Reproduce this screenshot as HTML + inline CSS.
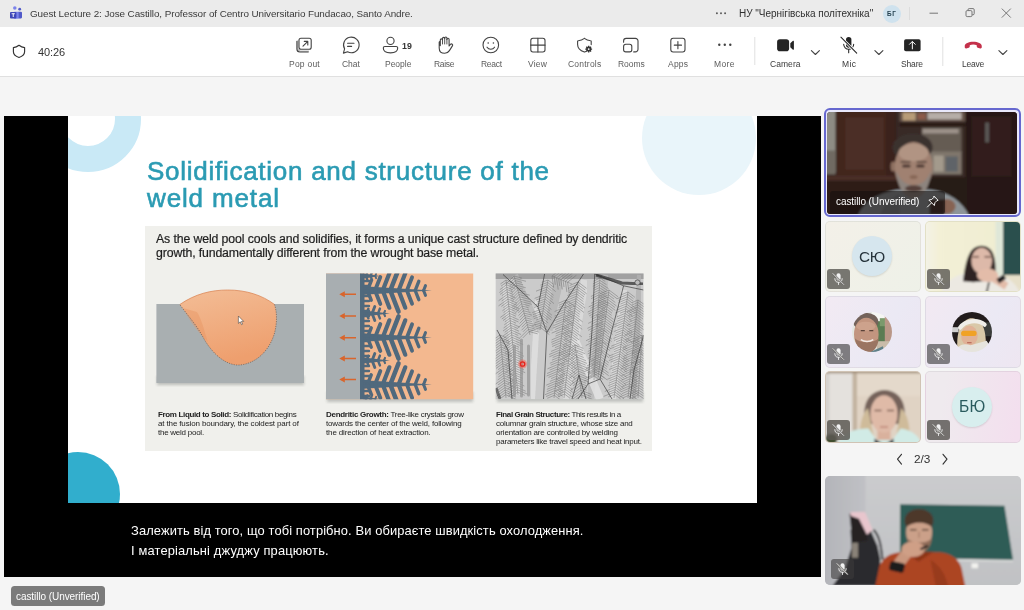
<!DOCTYPE html>
<html><head><meta charset="utf-8"><title>Teams</title>
<style>
html,body{margin:0;padding:0}
body{width:1024px;height:610px;position:relative;overflow:hidden;background:#f5f5f5;font-family:"Liberation Sans",sans-serif}
.t{position:absolute;white-space:nowrap;line-height:1;font-family:"Liberation Sans",sans-serif;will-change:transform}
.t b{font-weight:700}
.abs{position:absolute}
svg{position:absolute;overflow:visible}
.ico{fill:none;stroke:#424242;stroke-width:1.1;stroke-linecap:round;stroke-linejoin:round}
.tile{position:absolute;border-radius:5px;box-sizing:border-box;overflow:hidden}
.badge{position:absolute;width:23px;height:20px;border-radius:3px;background:rgba(72,70,66,.72)}
</style></head><body>

<div class="abs" style="left:0;top:0;width:1024px;height:27px;background:#ebebeb"></div>
<svg style="left:9px;top:5px" width="14" height="15" viewBox="0 0 14 15">
<circle cx="5.800" cy="3.100" r="1.750" fill="#7b83eb"/><circle cx="10.700" cy="4.200" r="1.400" fill="#5059c9"/>
<rect x="8.500" y="6.700" width="4.500" height="6.700" rx="1.100" fill="#5059c9"/>
<rect x="4.500" y="6.700" width="5.200" height="7" rx="1.100" fill="#7b83eb"/>
<rect x="1" y="6.900" width="6.400" height="6.600" rx="0.900" fill="#3f47b8"/>
<rect x="3.750" y="8.600" width="0.950" height="3.400" fill="#fff"/><rect x="2.600" y="8.300" width="3.250" height="0.900" fill="#fff"/>
</svg>
<div class="t" style="left:30.20px;top:9.00px;font-size:9.90px;letter-spacing:-0.079px;color:#3a3a3a;">Guest Lecture 2: Jose Castillo, Professor of Centro Universitario Fundacao, Santo Andre.</div>
<svg style="left:714px;top:10px" width="14" height="6" viewBox="714 10 14 6" fill="#555"><circle cx="716.900" cy="13.300" r="0.950"/><circle cx="721" cy="13.300" r="0.950"/><circle cx="725.100" cy="13.300" r="0.950"/></svg>
<div class="t" style="left:738.80px;top:9.00px;font-size:10.00px;letter-spacing:-0.018px;color:#303030;">НУ "Чернігівська політехніка"</div>
<div class="abs" style="left:882.5px;top:4.5px;width:18px;height:18px;border-radius:9px;background:#cfe2ee"></div>
<div class="t" style="left:887.20px;top:11.00px;font-size:6.40px;letter-spacing:0.772px;color:#24404f;"><b>БГ</b></div>
<div class="abs" style="left:909px;top:7px;width:1px;height:13px;background:#dcdcdc"></div>
<svg style="left:920px;top:0" width="104" height="27" viewBox="920 0 104 27" fill="none" stroke="#6a6a6a" stroke-width="0.9">
<path d="M929.5 13.2h8.5"/>
<rect x="966" y="10.6" width="6" height="6" rx="1.2"/><path d="M968 10.4v-0.6a1.2 1.2 0 0 1 1.2-1.2h3.8a1.2 1.2 0 0 1 1.2 1.2v3.8a1.2 1.2 0 0 1-1.2 1.2h-0.8"/>
<path d="M1001.8 8.6l9 9M1010.8 8.6l-9 9"/>
</svg>
<div class="abs" style="left:0;top:27px;width:1024px;height:49px;background:#fff;border-bottom:1px solid #e0e0e0"></div>
<svg style="left:0;top:27px" width="1024" height="49" viewBox="0 27 1024 49">
<g class="ico">
<path d="M19 45.3c2 1.6 3.9 2.2 5.6 2.3v4.2c0 2.9-2.3 4.6-5.6 5.7c-3.3-1.100-5.600-2.800-5.600-5.700v-4.200c1.700-0.100 3.600-0.700 5.600-2.300z" stroke="#333" stroke-width="1.15"/>
</g></svg>
<div class="t" style="left:37.80px;top:47.00px;font-size:11.00px;letter-spacing:-0.131px;color:#333;">40:26</div>
<div class="t" style="left:288.90px;top:60.00px;font-size:8.50px;letter-spacing:0.233px;color:#5c5c5c;">Pop out</div>
<div class="t" style="left:341.90px;top:60.00px;font-size:8.50px;letter-spacing:-0.051px;color:#5c5c5c;">Chat</div>
<div class="t" style="left:384.60px;top:60.00px;font-size:8.50px;letter-spacing:-0.013px;color:#5c5c5c;">People</div>
<div class="t" style="left:434.10px;top:60.00px;font-size:8.50px;letter-spacing:-0.333px;color:#5c5c5c;">Raise</div>
<div class="t" style="left:480.60px;top:60.00px;font-size:8.50px;letter-spacing:-0.301px;color:#5c5c5c;">React</div>
<div class="t" style="left:528.40px;top:60.00px;font-size:8.50px;letter-spacing:0.177px;color:#5c5c5c;">View</div>
<div class="t" style="left:567.80px;top:60.00px;font-size:8.50px;letter-spacing:0.222px;color:#5c5c5c;">Controls</div>
<div class="t" style="left:617.60px;top:60.00px;font-size:8.50px;letter-spacing:-0.031px;color:#5c5c5c;">Rooms</div>
<div class="t" style="left:668.00px;top:60.00px;font-size:8.50px;letter-spacing:0.209px;color:#5c5c5c;">Apps</div>
<div class="t" style="left:714.30px;top:60.00px;font-size:8.50px;letter-spacing:0.379px;color:#5c5c5c;">More</div>
<div class="t" style="left:770.00px;top:60.00px;font-size:8.50px;letter-spacing:0.054px;color:#3a3a3a;">Camera</div>
<div class="t" style="left:841.80px;top:60.00px;font-size:8.50px;letter-spacing:0.341px;color:#3a3a3a;">Mic</div>
<div class="t" style="left:901.10px;top:60.00px;font-size:8.50px;letter-spacing:-0.145px;color:#3a3a3a;">Share</div>
<div class="t" style="left:961.90px;top:60.00px;font-size:8.50px;letter-spacing:-0.214px;color:#3a3a3a;">Leave</div>
<div class="t" style="left:402.10px;top:42.00px;font-size:8.80px;letter-spacing:0.013px;color:#333;"><b>19</b></div>
<svg style="left:0;top:27px" width="1024" height="49" viewBox="0 27 1024 49">
<g class="ico">
<!-- pop out -->
<rect x="299" y="38.3" width="12.2" height="10.9" rx="2"/>
<path d="M296.900 41.200v7.800a3 3 0 0 0 3 3h8.300"/>
<path d="M297.800 40.800v7.600a2.800 2.800 0 0 0 2.800 2.800h8" stroke-width="0.8" opacity="0.6"/>
<path d="M303 46.200l4.600-4.600M304.300 41.400h3.500v3.500"/>
<!-- chat -->
<path d="M343.400 53.100l1.200-4.200a7.800 7.800 0 1 1 3 2.900z"/>
<path d="M347.600 43.300h6.400M347.600 46.400h4"/>
<!-- people -->
<circle cx="390.500" cy="40.900" r="3.600"/>
<path d="M384.800 46.500h11.400a1.500 1.500 0 0 1 1.500 1.500c0 3-3 4.900-7.200 4.900s-7.200-1.900-7.200-4.900a1.500 1.500 0 0 1 1.500-1.500z"/>
<!-- raise hand -->
<path d="M440.300 45.600v-5.600a1.100 1.100 0 0 1 2.200 0v-1.500a1.100 1.100 0 0 1 2.200 0v-0.400a1.100 1.100 0 0 1 2.200 0v1.300a1.100 1.100 0 0 1 2.200 0v6.600l1.400-1.600a1.200 1.200 0 0 1 1.900 1.500l-3 4.700c-1 1.600-2.400 2.700-4.700 2.700c-3.300 0-5.500-2.200-5.500-5.400v-5.500a1.050 1.050 0 0 1 1.100-1z"/>
<path d="M442.500 40v4M444.700 38.500v5.500M446.900 39.400v4.600" stroke-width="0.9"/>
<!-- react -->
<circle cx="490.800" cy="45" r="7.800"/>
<circle cx="488.200" cy="43" r="0.800" fill="#424242" stroke="none"/><circle cx="493.400" cy="43" r="0.800" fill="#424242" stroke="none"/>
<path d="M487 47.200a4.600 4.600 0 0 0 7.600 0"/>
<!-- view -->
<rect x="530.800" y="38.300" width="14.200" height="13.700" rx="2.200"/>
<path d="M537.900 38.300v13.700M530.800 45.150h14.200"/>
<!-- controls -->
<path d="M584.400 38.400c1.900 1.500 3.900 2.200 6.200 2.300a0.600 0.600 0 0 1 0.600 0.600v3.300M586 51.500l-1.600 0.600c-3.600-1.200-6.800-3.400-6.800-7.600v-3.200a0.600 0.600 0 0 1 0.600-0.600c2.300-0.100 4.300-0.800 6.200-2.300"/>
<!-- rooms -->
<path d="M623.600 42.200v-1.200a2.600 2.600 0 0 1 2.600-2.600h9.200a2.600 2.600 0 0 1 2.600 2.600v8.300a2.600 2.600 0 0 1-2.600 2.600h-1.700"/>
<rect x="623.600" y="44.200" width="8.200" height="7.700" rx="2.200"/>
<!-- apps -->
<rect x="670.800" y="38.300" width="14.200" height="13.700" rx="2.400"/>
<path d="M677.900 41.600v7.100M674.300 45.150h7.200"/>
</g>
<!-- controls gear -->
<g fill="#333"><circle cx="588.700" cy="49.100" r="2.500"/>
<path d="M588.700 45.700v6.800M585.300 49.100h6.800M586.300 46.700l4.800 4.800M591.100 46.700l-4.800 4.800" stroke="#333" stroke-width="1.300"/></g>
<circle cx="588.700" cy="49.100" r="0.900" fill="#fff"/>
<!-- more -->
<g fill="#424242"><circle cx="719.300" cy="44.700" r="1.200"/><circle cx="724.800" cy="44.700" r="1.200"/><circle cx="730.300" cy="44.700" r="1.200"/></g>
<rect x="754.300" y="37" width="1" height="28" fill="#e0e0e0"/>
<!-- camera -->
<rect x="777.100" y="39.300" width="12" height="11.900" rx="2.800" fill="#242424"/>
<path d="M790.300 43.200l2.400-2.200a0.700 0.700 0 0 1 1.200 0.500v7.500a0.700 0.700 0 0 1-1.200 0.500l-2.400-2.200z" fill="#242424"/>
<!-- chevrons -->
<g class="ico" stroke="#424242" stroke-width="1">
<path d="M811.400 50.700l4 3.800l4-3.800M874.900 50.700l4 3.800l4-3.800M998.900 50.700l4 3.800l4-3.800"/>
</g>
<!-- mic off -->
<rect x="846" y="36.900" width="5.400" height="10.800" rx="2.700" fill="#242424"/>
<path d="M843.700 44.300a5 5 0 0 0 10 0M848.700 49.500v3.300" fill="none" stroke="#242424" stroke-width="1.050" stroke-linecap="round"/>
<path d="M840.900 37.200l15.800 15.900" stroke="#fff" stroke-width="2.600"/>
<path d="M840.900 37.200l15.800 15.900" stroke="#242424" stroke-width="1.050" stroke-linecap="round"/>
<!-- share -->
<rect x="904.100" y="39.200" width="16.500" height="12" rx="1.800" fill="#242424"/>
<path d="M912.350 48.900v-7M909.500 44.300l2.850-2.850l2.850 2.850" fill="none" stroke="#fff" stroke-width="1" stroke-linecap="round" stroke-linejoin="round"/>
<rect x="942.300" y="37" width="1" height="29" fill="#e0e0e0"/>
<!-- leave -->
<path d="M973.250 41.700c-4.600 0-8.500 1.600-8.500 4.300v1.300c0 0.800 0.700 1.300 1.500 1.100l2.500-0.600c0.600-0.150 1-0.600 1-1.200v-1.400c1-0.500 2.200-0.700 3.500-0.700s2.500 0.200 3.500 0.700v1.400c0 0.600 0.400 1.050 1 1.200l2.500 0.600c0.800 0.200 1.500-0.300 1.500-1.100v-1.300c0-2.700-3.900-4.300-8.500-4.300z" fill="#c4314b"/>
</svg>
<div class="abs" style="left:4px;top:116px;width:817px;height:461px;background:#000"></div>
<div class="abs" style="left:68px;top:116px;width:689px;height:387px;background:#fff;overflow:hidden">
<div class="abs" style="left:-33px;top:-50px;width:106px;height:106px;border-radius:50%;border:26px solid #c9e9f6;box-sizing:border-box"></div>
<div class="abs" style="left:574px;top:-35px;width:114px;height:114px;border-radius:50%;background:#e9f5fa"></div>
<div class="abs" style="left:-32px;top:336px;width:84px;height:84px;border-radius:50%;background:linear-gradient(#31aecd 75%,#59bdd6)"></div>
<div class="abs" style="left:77px;top:110px;width:507px;height:224.5px;background:#f0f0ec"></div>
</div>
<div class="t" style="left:146.60px;top:158.00px;font-size:26.00px;letter-spacing:0.730px;color:#2b9bb3;-webkit-text-stroke:0.6px #2b9bb3;">Solidification and structure of the</div>
<div class="t" style="left:146.60px;top:185.00px;font-size:26.00px;letter-spacing:0.859px;color:#2b9bb3;-webkit-text-stroke:0.6px #2b9bb3;">weld metal</div>
<div class="t" style="left:156.30px;top:233.00px;font-size:12.30px;letter-spacing:-0.117px;color:#1d1d1d;-webkit-text-stroke:0.2px #1d1d1d;">As the weld pool cools and solidifies, it forms a unique cast structure defined by dendritic</div>
<div class="t" style="left:156.30px;top:247.00px;font-size:12.30px;letter-spacing:-0.130px;color:#1d1d1d;-webkit-text-stroke:0.2px #1d1d1d;">growth, fundamentally different from the wrought base metal.</div>
<div class="t" style="left:158.00px;top:411.00px;font-size:8.00px;letter-spacing:-0.351px;color:#222;"><b>From Liquid to Solid:</b> Solidification begins</div>
<div class="t" style="left:158.00px;top:420.00px;font-size:8.00px;letter-spacing:-0.136px;color:#222;">at the fusion boundary, the coldest part of</div>
<div class="t" style="left:158.00px;top:429.00px;font-size:8.00px;letter-spacing:-0.251px;color:#222;">the weld pool.</div>
<div class="t" style="left:326.30px;top:411.00px;font-size:8.00px;letter-spacing:-0.286px;color:#222;"><b>Dendritic Growth:</b> Tree-like crystals grow</div>
<div class="t" style="left:326.30px;top:420.00px;font-size:8.00px;letter-spacing:-0.165px;color:#222;">towards the center of the weld, following</div>
<div class="t" style="left:326.30px;top:429.00px;font-size:8.00px;letter-spacing:-0.147px;color:#222;">the direction of heat extraction.</div>
<div class="t" style="left:495.70px;top:411.00px;font-size:8.00px;letter-spacing:-0.385px;color:#222;"><b>Final Grain Structure:</b> This results in a</div>
<div class="t" style="left:495.70px;top:420.00px;font-size:8.00px;letter-spacing:-0.232px;color:#222;">columnar grain structure, whose size and</div>
<div class="t" style="left:495.70px;top:429.00px;font-size:8.00px;letter-spacing:-0.169px;color:#222;">orientation are controlled by welding</div>
<div class="t" style="left:495.70px;top:438.00px;font-size:8.00px;letter-spacing:-0.226px;color:#222;">parameters like travel speed and heat input.</div>
<svg style="left:0;top:0" width="1024" height="610" viewBox="0 0 1024 610">
<defs>
<filter id="sh" x="-10%" y="-10%" width="120%" height="130%"><feGaussianBlur stdDeviation="1.6"/></filter>
<filter id="b1"><feGaussianBlur stdDeviation="0.6"/></filter>
<filter id="b2"><feGaussianBlur stdDeviation="1.2"/></filter>
<filter id="b3"><feGaussianBlur stdDeviation="2.5"/></filter>
<linearGradient id="pool" x1="0" y1="0" x2="0.3" y2="1"><stop offset="0" stop-color="#f3bd96"/><stop offset="1" stop-color="#ee9f6e"/></linearGradient>
<clipPath id="c2"><rect x="326" y="273.500" width="147.200" height="125.800"/></clipPath>
<clipPath id="c3"><rect x="495.700" y="273.500" width="147.800" height="125.800"/></clipPath>
</defs>
<rect x="157" y="376" width="147" height="9" fill="#8f938f" opacity="0.55" filter="url(#sh)"/>
<rect x="156.400" y="304" width="147.600" height="79" fill="#a9afb1"/>
<path d="M179.800 304.500C195 294 211 290 227.600 290C246 290 262 295 274.500 304.500C277 312 277.200 322 274.800 332C271 347 259 363 240 365C227 366 213 355 203.500 338C196 324 188 316 179.800 304.500Z" fill="url(#pool)"/>
<path d="M183 308C190 322 198 332 208 342C204 330 202 320 197 312Z" fill="#e8935f" opacity="0.4" filter="url(#b1)"/>
<path d="M179.800 304.500C195 294 211 290 227.600 290C246 290 262 295 274.500 304.500" fill="none" stroke="#d9804e" stroke-width="0.7"/>
<path d="M274.500 304.500C277 312 277.200 322 274.800 332C271 347 259 363 240 365C227 366 213 355 203.500 338C196 324 188 316 179.800 304.500" fill="none" stroke="#6b5a50" stroke-width="0.7" stroke-dasharray="1.2 1.2"/>
<path d="M238.400 316v7.400l1.800-1.600l1.300 2.900l1.100-0.500l-1.300-2.800h2.400z" fill="#fff" stroke="#333" stroke-width="0.5"/>
<rect x="327" y="392" width="146" height="10" fill="#8f938f" opacity="0.5" filter="url(#sh)"/>
<g clip-path="url(#c2)">
<rect x="326" y="273" width="148" height="127" fill="#f3b88f"/>
<rect x="326" y="273" width="34.500" height="127" fill="#a8aeb1"/>
<rect x="360" y="273" width="4.500" height="127" fill="#50697d"/>
<path d="M363.5 286.2L432.0 290.5L363.5 294.8Z" fill="#50697d"/>
<path d="M367.4 290.5L371.2 280.9" stroke="#50697d" stroke-width="3.5" stroke-linecap="round"/>
<path d="M367.4 290.5L371.2 300.1" stroke="#50697d" stroke-width="3.5" stroke-linecap="round"/>
<path d="M375.0 290.5L380.3 277.1" stroke="#50697d" stroke-width="3.9" stroke-linecap="round"/>
<path d="M375.0 290.5L380.3 303.9" stroke="#50697d" stroke-width="3.9" stroke-linecap="round"/>
<path d="M382.7 290.5L389.4 273.3" stroke="#50697d" stroke-width="4.2" stroke-linecap="round"/>
<path d="M382.7 290.5L389.4 307.7" stroke="#50697d" stroke-width="4.2" stroke-linecap="round"/>
<path d="M390.3 290.5L398.5 269.5" stroke="#50697d" stroke-width="4.6" stroke-linecap="round"/>
<path d="M390.3 290.5L398.5 311.5" stroke="#50697d" stroke-width="4.6" stroke-linecap="round"/>
<path d="M398.6 290.5L405.3 273.3" stroke="#50697d" stroke-width="4.2" stroke-linecap="round"/>
<path d="M398.6 290.5L405.3 307.7" stroke="#50697d" stroke-width="4.2" stroke-linecap="round"/>
<path d="M406.9 290.5L412.1 277.2" stroke="#50697d" stroke-width="3.8" stroke-linecap="round"/>
<path d="M406.9 290.5L412.1 303.8" stroke="#50697d" stroke-width="3.8" stroke-linecap="round"/>
<path d="M415.2 290.5L418.8 281.3" stroke="#50697d" stroke-width="3.4" stroke-linecap="round"/>
<path d="M415.2 290.5L418.8 299.7" stroke="#50697d" stroke-width="3.4" stroke-linecap="round"/>
<path d="M423.6 290.5L425.5 285.6" stroke="#50697d" stroke-width="3.0" stroke-linecap="round"/>
<path d="M423.6 290.5L425.5 295.4" stroke="#50697d" stroke-width="3.0" stroke-linecap="round"/>
<path d="M363.5 333.2L432.0 337.5L363.5 341.8Z" fill="#50697d"/>
<path d="M367.4 337.5L371.2 327.9" stroke="#50697d" stroke-width="3.5" stroke-linecap="round"/>
<path d="M367.4 337.5L371.2 347.1" stroke="#50697d" stroke-width="3.5" stroke-linecap="round"/>
<path d="M375.0 337.5L380.3 324.1" stroke="#50697d" stroke-width="3.9" stroke-linecap="round"/>
<path d="M375.0 337.5L380.3 350.9" stroke="#50697d" stroke-width="3.9" stroke-linecap="round"/>
<path d="M382.7 337.5L389.4 320.3" stroke="#50697d" stroke-width="4.2" stroke-linecap="round"/>
<path d="M382.7 337.5L389.4 354.7" stroke="#50697d" stroke-width="4.2" stroke-linecap="round"/>
<path d="M390.3 337.5L398.5 316.5" stroke="#50697d" stroke-width="4.6" stroke-linecap="round"/>
<path d="M390.3 337.5L398.5 358.5" stroke="#50697d" stroke-width="4.6" stroke-linecap="round"/>
<path d="M398.6 337.5L405.3 320.3" stroke="#50697d" stroke-width="4.2" stroke-linecap="round"/>
<path d="M398.6 337.5L405.3 354.7" stroke="#50697d" stroke-width="4.2" stroke-linecap="round"/>
<path d="M406.9 337.5L412.1 324.2" stroke="#50697d" stroke-width="3.8" stroke-linecap="round"/>
<path d="M406.9 337.5L412.1 350.8" stroke="#50697d" stroke-width="3.8" stroke-linecap="round"/>
<path d="M415.2 337.5L418.8 328.3" stroke="#50697d" stroke-width="3.4" stroke-linecap="round"/>
<path d="M415.2 337.5L418.8 346.7" stroke="#50697d" stroke-width="3.4" stroke-linecap="round"/>
<path d="M423.6 337.5L425.5 332.6" stroke="#50697d" stroke-width="3.0" stroke-linecap="round"/>
<path d="M423.6 337.5L425.5 342.4" stroke="#50697d" stroke-width="3.0" stroke-linecap="round"/>
<path d="M363.5 380.2L432.0 384.5L363.5 388.8Z" fill="#50697d"/>
<path d="M367.4 384.5L371.2 374.9" stroke="#50697d" stroke-width="3.5" stroke-linecap="round"/>
<path d="M367.4 384.5L371.2 394.1" stroke="#50697d" stroke-width="3.5" stroke-linecap="round"/>
<path d="M375.0 384.5L380.3 371.1" stroke="#50697d" stroke-width="3.9" stroke-linecap="round"/>
<path d="M375.0 384.5L380.3 397.9" stroke="#50697d" stroke-width="3.9" stroke-linecap="round"/>
<path d="M382.7 384.5L389.4 367.3" stroke="#50697d" stroke-width="4.2" stroke-linecap="round"/>
<path d="M382.7 384.5L389.4 401.7" stroke="#50697d" stroke-width="4.2" stroke-linecap="round"/>
<path d="M390.3 384.5L398.5 363.5" stroke="#50697d" stroke-width="4.6" stroke-linecap="round"/>
<path d="M390.3 384.5L398.5 405.5" stroke="#50697d" stroke-width="4.6" stroke-linecap="round"/>
<path d="M398.6 384.5L405.3 367.3" stroke="#50697d" stroke-width="4.2" stroke-linecap="round"/>
<path d="M398.6 384.5L405.3 401.7" stroke="#50697d" stroke-width="4.2" stroke-linecap="round"/>
<path d="M406.9 384.5L412.1 371.2" stroke="#50697d" stroke-width="3.8" stroke-linecap="round"/>
<path d="M406.9 384.5L412.1 397.8" stroke="#50697d" stroke-width="3.8" stroke-linecap="round"/>
<path d="M415.2 384.5L418.8 375.3" stroke="#50697d" stroke-width="3.4" stroke-linecap="round"/>
<path d="M415.2 384.5L418.8 393.7" stroke="#50697d" stroke-width="3.4" stroke-linecap="round"/>
<path d="M423.6 384.5L425.5 379.6" stroke="#50697d" stroke-width="3.0" stroke-linecap="round"/>
<path d="M423.6 384.5L425.5 389.4" stroke="#50697d" stroke-width="3.0" stroke-linecap="round"/>
<path d="M363.5 310.5L390.0 313.5L363.5 316.5Z" fill="#50697d"/>
<path d="M366.5 313.5L368.4 308.8" stroke="#50697d" stroke-width="2.5" stroke-linecap="round"/>
<path d="M366.5 313.5L368.4 318.2" stroke="#50697d" stroke-width="2.5" stroke-linecap="round"/>
<path d="M372.1 313.5L374.8 306.5" stroke="#50697d" stroke-width="2.9" stroke-linecap="round"/>
<path d="M372.1 313.5L374.8 320.5" stroke="#50697d" stroke-width="2.9" stroke-linecap="round"/>
<path d="M378.0 313.5L379.9 308.6" stroke="#50697d" stroke-width="2.5" stroke-linecap="round"/>
<path d="M378.0 313.5L379.9 318.4" stroke="#50697d" stroke-width="2.5" stroke-linecap="round"/>
<path d="M384.0 313.5L385.0 310.9" stroke="#50697d" stroke-width="2.1" stroke-linecap="round"/>
<path d="M384.0 313.5L385.0 316.1" stroke="#50697d" stroke-width="2.1" stroke-linecap="round"/>
<path d="M363.5 357.5L390.0 360.5L363.5 363.5Z" fill="#50697d"/>
<path d="M366.5 360.5L368.4 355.8" stroke="#50697d" stroke-width="2.5" stroke-linecap="round"/>
<path d="M366.5 360.5L368.4 365.2" stroke="#50697d" stroke-width="2.5" stroke-linecap="round"/>
<path d="M372.1 360.5L374.8 353.5" stroke="#50697d" stroke-width="2.9" stroke-linecap="round"/>
<path d="M372.1 360.5L374.8 367.5" stroke="#50697d" stroke-width="2.9" stroke-linecap="round"/>
<path d="M378.0 360.5L379.9 355.6" stroke="#50697d" stroke-width="2.5" stroke-linecap="round"/>
<path d="M378.0 360.5L379.9 365.4" stroke="#50697d" stroke-width="2.5" stroke-linecap="round"/>
<path d="M384.0 360.5L385.0 357.9" stroke="#50697d" stroke-width="2.1" stroke-linecap="round"/>
<path d="M384.0 360.5L385.0 363.1" stroke="#50697d" stroke-width="2.1" stroke-linecap="round"/>
<path d="M363.5 273.5L380.0 276.0L363.5 278.5Z" fill="#50697d"/>
<path d="M365.9 276.0L367.3 272.4" stroke="#50697d" stroke-width="2.3" stroke-linecap="round"/>
<path d="M365.9 276.0L367.3 279.6" stroke="#50697d" stroke-width="2.3" stroke-linecap="round"/>
<path d="M370.5 276.0L372.1 271.9" stroke="#50697d" stroke-width="2.4" stroke-linecap="round"/>
<path d="M370.5 276.0L372.1 280.1" stroke="#50697d" stroke-width="2.4" stroke-linecap="round"/>
<path d="M375.2 276.0L376.1 273.8" stroke="#50697d" stroke-width="1.9" stroke-linecap="round"/>
<path d="M375.2 276.0L376.1 278.2" stroke="#50697d" stroke-width="1.9" stroke-linecap="round"/>
<path d="M363.5 396.5L380.0 399.0L363.5 401.5Z" fill="#50697d"/>
<path d="M365.9 399.0L367.3 395.4" stroke="#50697d" stroke-width="2.3" stroke-linecap="round"/>
<path d="M365.9 399.0L367.3 402.6" stroke="#50697d" stroke-width="2.3" stroke-linecap="round"/>
<path d="M370.5 399.0L372.1 394.9" stroke="#50697d" stroke-width="2.4" stroke-linecap="round"/>
<path d="M370.5 399.0L372.1 403.1" stroke="#50697d" stroke-width="2.4" stroke-linecap="round"/>
<path d="M375.2 399.0L376.1 396.8" stroke="#50697d" stroke-width="1.9" stroke-linecap="round"/>
<path d="M375.2 399.0L376.1 401.2" stroke="#50697d" stroke-width="1.9" stroke-linecap="round"/>
<path d="M364 276h5" stroke="#50697d" stroke-width="2.400" stroke-linecap="round"/>
<path d="M364 281h5" stroke="#50697d" stroke-width="2.400" stroke-linecap="round"/>
<path d="M364 286h5" stroke="#50697d" stroke-width="2.400" stroke-linecap="round"/>
<path d="M364 291h5" stroke="#50697d" stroke-width="2.400" stroke-linecap="round"/>
<path d="M364 296h5" stroke="#50697d" stroke-width="2.400" stroke-linecap="round"/>
<path d="M364 301h5" stroke="#50697d" stroke-width="2.400" stroke-linecap="round"/>
<path d="M364 306h5" stroke="#50697d" stroke-width="2.400" stroke-linecap="round"/>
<path d="M364 311h5" stroke="#50697d" stroke-width="2.400" stroke-linecap="round"/>
<path d="M364 316h5" stroke="#50697d" stroke-width="2.400" stroke-linecap="round"/>
<path d="M364 321h5" stroke="#50697d" stroke-width="2.400" stroke-linecap="round"/>
<path d="M364 326h5" stroke="#50697d" stroke-width="2.400" stroke-linecap="round"/>
<path d="M364 331h5" stroke="#50697d" stroke-width="2.400" stroke-linecap="round"/>
<path d="M364 336h5" stroke="#50697d" stroke-width="2.400" stroke-linecap="round"/>
<path d="M364 341h5" stroke="#50697d" stroke-width="2.400" stroke-linecap="round"/>
<path d="M364 346h5" stroke="#50697d" stroke-width="2.400" stroke-linecap="round"/>
<path d="M364 351h5" stroke="#50697d" stroke-width="2.400" stroke-linecap="round"/>
<path d="M364 356h5" stroke="#50697d" stroke-width="2.400" stroke-linecap="round"/>
<path d="M364 361h5" stroke="#50697d" stroke-width="2.400" stroke-linecap="round"/>
<path d="M364 366h5" stroke="#50697d" stroke-width="2.400" stroke-linecap="round"/>
<path d="M364 371h5" stroke="#50697d" stroke-width="2.400" stroke-linecap="round"/>
<path d="M364 376h5" stroke="#50697d" stroke-width="2.400" stroke-linecap="round"/>
<path d="M364 381h5" stroke="#50697d" stroke-width="2.400" stroke-linecap="round"/>
<path d="M364 386h5" stroke="#50697d" stroke-width="2.400" stroke-linecap="round"/>
<path d="M364 391h5" stroke="#50697d" stroke-width="2.400" stroke-linecap="round"/>
<path d="M364 396h5" stroke="#50697d" stroke-width="2.400" stroke-linecap="round"/>
<path d="M356 294.3H341.500" stroke="#d9652c" stroke-width="1.5"/><path d="M344.800 291.3L339.300 294.3L344.800 297.3Z" fill="#d9652c"/>
<path d="M356 316.0H341.500" stroke="#d9652c" stroke-width="1.5"/><path d="M344.800 313.0L339.300 316.0L344.800 319.0Z" fill="#d9652c"/>
<path d="M356 337.7H341.500" stroke="#d9652c" stroke-width="1.5"/><path d="M344.800 334.7L339.300 337.7L344.800 340.7Z" fill="#d9652c"/>
<path d="M356 358.5H341.500" stroke="#d9652c" stroke-width="1.5"/><path d="M344.800 355.5L339.300 358.5L344.800 361.5Z" fill="#d9652c"/>
<path d="M356 379.5H341.500" stroke="#d9652c" stroke-width="1.5"/><path d="M344.800 376.5L339.300 379.5L344.800 382.5Z" fill="#d9652c"/>
</g>
<rect x="497" y="392" width="146" height="10" fill="#8f938f" opacity="0.5" filter="url(#sh)"/>
<g clip-path="url(#c3)">
<rect x="495" y="273" width="150" height="127" fill="#cbcbcb"/><rect x="495" y="271" width="150" height="8" fill="#8f8f8f" opacity="0.7" filter="url(#b1)"/>
<path d="M505 285L520 395" stroke="#dcdcdc" stroke-width="7" opacity="0.8" filter="url(#b1)"/>
<path d="M538 300L532 399" stroke="#e2e2e2" stroke-width="6" opacity="0.8" filter="url(#b1)"/>
<path d="M560 275L548 330" stroke="#b4b4b4" stroke-width="9" opacity="0.8" filter="url(#b1)"/>
<path d="M585 280L565 399" stroke="#dedede" stroke-width="8" opacity="0.8" filter="url(#b1)"/>
<path d="M606 275L590 399" stroke="#b9b9b9" stroke-width="7" opacity="0.8" filter="url(#b1)"/>
<path d="M625 290L612 399" stroke="#dddddd" stroke-width="8" opacity="0.8" filter="url(#b1)"/>
<path d="M640 275L633 399" stroke="#b2b2b2" stroke-width="6" opacity="0.8" filter="url(#b1)"/>
<path d="M575 340L600 399" stroke="#e4e4e4" stroke-width="8" opacity="0.8" filter="url(#b1)"/>
<path d="M515 275L540 330" stroke="#b8b8b8" stroke-width="6" opacity="0.8" filter="url(#b1)"/>
<path d="M506.0 280.0l7.3 3.2M506.0 280.0l-5.6 4.0M506.2 282.4l9.1 4.0M506.2 282.4l-5.2 3.8M506.5 284.8l8.4 3.7M506.5 284.8l-6.6 4.8M506.7 287.2l5.8 2.6M506.7 287.2l-7.3 5.3M507.0 289.5l5.7 2.5M507.0 289.5l-7.0 5.0M507.2 291.9l5.9 2.6M507.2 291.9l-5.3 3.8M507.5 294.3l7.8 3.5M507.5 294.3l-8.9 6.4M507.7 296.7l6.2 2.7M507.7 296.7l-6.0 4.3M508.0 299.1l8.9 4.0M508.0 299.1l-9.5 6.8M508.2 301.5l8.7 3.8M508.2 301.5l-6.8 4.9M508.5 303.9l10.8 4.8M508.5 303.9l-5.1 3.7M508.7 306.3l10.2 4.5M508.7 306.3l-6.3 4.5M509.0 308.6l6.3 2.8M509.0 308.6l-5.4 3.9M509.2 311.0l7.2 3.2M509.2 311.0l-8.8 6.4M509.5 313.4l6.5 2.9M509.5 313.4l-7.7 5.6M509.7 315.8l9.0 4.0M509.7 315.8l-6.7 4.8M510.0 318.2l8.5 3.8M510.0 318.2l-5.2 3.7M510.2 320.6l5.8 2.6M510.2 320.6l-5.9 4.2M510.5 323.0l9.2 4.1M510.5 323.0l-6.9 5.0M510.7 325.4l7.2 3.2M510.7 325.4l-7.7 5.6M511.0 327.7l8.0 3.5M511.0 327.7l-6.3 4.6M511.2 330.1l9.8 4.4M511.2 330.1l-8.3 6.0M511.5 332.5l6.8 3.0M511.5 332.5l-7.7 5.5M511.7 334.9l8.4 3.7M511.7 334.9l-9.1 6.6M512.0 337.3l9.5 4.2M512.0 337.3l-6.3 4.5M512.2 339.7l10.9 4.8M512.2 339.7l-5.4 3.9M512.5 342.1l7.8 3.4M512.5 342.1l-8.6 6.2M512.7 344.5l6.3 2.8M512.7 344.5l-7.2 5.2M513.0 346.8l5.7 2.5M513.0 346.8l-8.1 5.9M513.2 349.2l9.7 4.3M513.2 349.2l-7.7 5.5M513.5 351.6l10.3 4.6M513.5 351.6l-6.4 4.6M513.7 354.0l9.3 4.1M513.7 354.0l-7.8 5.6M514.0 356.4l8.7 3.8M514.0 356.4l-7.1 5.1M514.2 358.8l10.1 4.5M514.2 358.8l-9.5 6.8M514.5 361.2l8.1 3.6M514.5 361.2l-8.1 5.8M514.7 363.5l5.8 2.6M514.7 363.5l-8.3 6.0M515.0 365.9l9.0 4.0M515.0 365.9l-9.7 7.0M515.2 368.3l10.0 4.4M515.2 368.3l-6.3 4.5M515.5 370.7l7.6 3.4M515.5 370.7l-8.1 5.9M515.7 373.1l5.6 2.5M515.7 373.1l-7.1 5.1M516.0 375.5l6.4 2.8M516.0 375.5l-5.4 3.9M516.2 377.9l5.8 2.6M516.2 377.9l-8.6 6.2M516.5 380.3l6.2 2.7M516.5 380.3l-6.1 4.4M516.7 382.6l7.6 3.4M516.7 382.6l-9.1 6.6M517.0 385.0l5.9 2.6M517.0 385.0l-7.1 5.1M517.2 387.4l8.5 3.8M517.2 387.4l-9.2 6.6M517.5 389.8l10.0 4.4M517.5 389.8l-9.1 6.5M517.7 392.2l7.0 3.1M517.7 392.2l-6.9 5.0" stroke="#707070" stroke-width="0.50" fill="none"/>
<path d="M506 280L518 395" stroke="#777" stroke-width="0.5"/>
<path d="M514.0 276.0l7.9 2.1M514.0 276.0l-8.0 8.0M514.6 278.3l11.4 3.0M514.6 278.3l-4.9 4.9M515.3 280.6l6.8 1.8M515.3 280.6l-5.2 5.2M515.9 282.9l7.2 1.9M515.9 282.9l-6.3 6.3M516.5 285.3l9.2 2.4M516.5 285.3l-5.4 5.4M517.1 287.6l5.8 1.5M517.1 287.6l-6.0 6.0M517.8 289.9l7.9 2.1M517.8 289.9l-6.6 6.6M518.4 292.2l11.3 3.0M518.4 292.2l-7.2 7.2M519.0 294.5l8.8 2.3M519.0 294.5l-6.9 6.9M519.7 296.8l9.7 2.5M519.7 296.8l-4.5 4.5M520.3 299.2l11.0 2.9M520.3 299.2l-7.6 7.6M520.9 301.5l10.9 2.8M520.9 301.5l-7.6 7.6M521.5 303.8l8.1 2.1M521.5 303.8l-5.9 5.9M522.2 306.1l6.4 1.7M522.2 306.1l-6.9 6.9M522.8 308.4l6.2 1.6M522.8 308.4l-4.5 4.5M523.4 310.7l7.0 1.8M523.4 310.7l-4.9 4.9M524.1 313.1l7.8 2.0M524.1 313.1l-4.5 4.5M524.7 315.4l5.8 1.5M524.7 315.4l-4.9 4.9M525.3 317.7l6.4 1.7M525.3 317.7l-5.8 5.8M525.9 320.0l6.0 1.6M525.9 320.0l-8.0 8.0M526.6 322.3l9.4 2.5M526.6 322.3l-4.9 4.9M527.2 324.6l7.3 1.9M527.2 324.6l-5.7 5.7M527.8 327.0l7.9 2.1M527.8 327.0l-4.8 4.8M528.4 329.3l10.7 2.8M528.4 329.3l-8.5 8.5M529.1 331.6l8.5 2.2M529.1 331.6l-6.3 6.3" stroke="#707070" stroke-width="0.50" fill="none"/>
<path d="M514 276L530 335" stroke="#777" stroke-width="0.5"/>
<path d="M548.0 280.0l5.1 4.1M548.0 280.0l-6.2 2.3M547.6 282.4l6.3 5.1M547.6 282.4l-7.1 2.7M547.2 284.7l8.5 6.9M547.2 284.7l-6.5 2.5M546.9 287.1l4.8 3.9M546.9 287.1l-10.9 4.1M546.5 289.5l7.1 5.8M546.5 289.5l-6.4 2.4M546.1 291.8l7.2 5.8M546.1 291.8l-5.8 2.2M545.7 294.2l7.1 5.8M545.7 294.2l-11.1 4.2M545.3 296.6l8.7 7.0M545.3 296.6l-9.5 3.6M545.0 299.0l5.9 4.8M545.0 299.0l-7.7 2.9M544.6 301.3l5.4 4.4M544.6 301.3l-9.9 3.8M544.2 303.7l7.2 5.8M544.2 303.7l-10.0 3.8M543.8 306.1l6.2 5.0M543.8 306.1l-6.9 2.6M543.4 308.4l8.5 6.8M543.4 308.4l-11.1 4.2M543.1 310.8l8.6 7.0M543.1 310.8l-10.1 3.8M542.7 313.2l8.5 6.9M542.7 313.2l-9.8 3.7M542.3 315.5l5.7 4.6M542.3 315.5l-8.5 3.2M541.9 317.9l6.3 5.1M541.9 317.9l-5.8 2.2M541.6 320.3l4.8 3.9M541.6 320.3l-7.2 2.7M541.2 322.7l5.9 4.7M541.2 322.7l-9.5 3.6M540.8 325.0l9.1 7.4M540.8 325.0l-8.1 3.1M540.4 327.4l9.0 7.3M540.4 327.4l-11.2 4.2" stroke="#707070" stroke-width="0.50" fill="none"/>
<path d="M548 280L540 330" stroke="#777" stroke-width="0.5"/>
<path d="M566.0 300.0l9.4 7.0M566.0 300.0l-7.5 3.2M565.7 302.4l5.9 4.4M565.7 302.4l-6.8 2.9M565.4 304.8l5.7 4.3M565.4 304.8l-6.7 2.8M565.1 307.1l7.8 5.8M565.1 307.1l-10.5 4.4M564.8 309.5l8.8 6.6M564.8 309.5l-8.2 3.4M564.5 311.9l7.9 5.9M564.5 311.9l-9.9 4.2M564.2 314.3l5.2 3.9M564.2 314.3l-9.2 3.9M564.0 316.7l9.2 6.9M564.0 316.7l-9.9 4.2M563.7 319.1l8.4 6.3M563.7 319.1l-8.2 3.4M563.4 321.4l5.7 4.2M563.4 321.4l-9.9 4.2M563.1 323.8l6.4 4.8M563.1 323.8l-10.0 4.2M562.8 326.2l9.5 7.1M562.8 326.2l-7.7 3.3M562.5 328.6l6.7 5.0M562.5 328.6l-10.8 4.5M562.2 331.0l8.3 6.2M562.2 331.0l-6.5 2.7M561.9 333.4l5.4 4.1M561.9 333.4l-6.4 2.7M561.6 335.7l9.1 6.8M561.6 335.7l-10.0 4.2M561.3 338.1l5.5 4.1M561.3 338.1l-10.1 4.3M561.0 340.5l9.5 7.1M561.0 340.5l-9.2 3.9M560.7 342.9l6.5 4.9M560.7 342.9l-8.6 3.6M560.5 345.3l5.4 4.1M560.5 345.3l-5.6 2.4M560.2 347.6l9.5 7.1M560.2 347.6l-9.1 3.8M559.9 350.0l7.3 5.5M559.9 350.0l-10.7 4.5M559.6 352.4l6.9 5.2M559.6 352.4l-10.3 4.4M559.3 354.8l8.8 6.6M559.3 354.8l-6.7 2.8M559.0 357.2l6.0 4.5M559.0 357.2l-7.1 3.0M558.7 359.6l6.0 4.5M558.7 359.6l-8.8 3.7M558.4 361.9l6.0 4.5M558.4 361.9l-7.8 3.3M558.1 364.3l5.4 4.1M558.1 364.3l-10.6 4.5M557.8 366.7l6.5 4.9M557.8 366.7l-8.1 3.4M557.5 369.1l7.6 5.7M557.5 369.1l-10.5 4.4M557.2 371.5l6.8 5.1M557.2 371.5l-10.6 4.5M557.0 373.8l7.2 5.4M557.0 373.8l-8.5 3.6M556.7 376.2l7.3 5.5M556.7 376.2l-5.6 2.4M556.4 378.6l6.9 5.2M556.4 378.6l-6.5 2.8M556.1 381.0l4.8 3.6M556.1 381.0l-9.9 4.2M555.8 383.4l5.6 4.2M555.8 383.4l-8.1 3.4M555.5 385.8l8.3 6.2M555.5 385.8l-8.6 3.6M555.2 388.1l6.4 4.8M555.2 388.1l-8.4 3.5M554.9 390.5l7.5 5.6M554.9 390.5l-9.9 4.2M554.6 392.9l5.3 4.0M554.6 392.9l-8.6 3.6M554.3 395.3l6.0 4.5M554.3 395.3l-7.1 3.0" stroke="#707070" stroke-width="0.50" fill="none"/>
<path d="M566 300L554 398" stroke="#777" stroke-width="0.5"/>
<path d="M578.0 282.0l8.5 6.4M578.0 282.0l-8.3 3.5M577.7 284.4l7.5 5.6M577.7 284.4l-9.7 4.1M577.4 286.8l9.2 6.9M577.4 286.8l-8.0 3.4M577.1 289.1l7.8 5.8M577.1 289.1l-8.3 3.5M576.8 291.5l7.3 5.4M576.8 291.5l-9.4 4.0M576.6 293.9l7.0 5.2M576.6 293.9l-8.5 3.6M576.3 296.3l7.1 5.3M576.3 296.3l-10.7 4.5M576.0 298.7l8.2 6.1M576.0 298.7l-10.4 4.4M575.7 301.1l9.3 7.0M575.7 301.1l-7.0 2.9M575.4 303.4l7.5 5.6M575.4 303.4l-10.7 4.5M575.1 305.8l8.8 6.6M575.1 305.8l-6.3 2.7M574.8 308.2l5.4 4.0M574.8 308.2l-8.0 3.4M574.5 310.6l5.2 3.8M574.5 310.6l-6.9 2.9M574.3 313.0l5.2 3.8M574.3 313.0l-9.2 3.9M574.0 315.4l8.6 6.4M574.0 315.4l-10.5 4.4M573.7 317.7l5.6 4.1M573.7 317.7l-9.5 4.0M573.4 320.1l8.0 6.0M573.4 320.1l-6.3 2.7M573.1 322.5l9.1 6.8M573.1 322.5l-10.9 4.6M572.8 324.9l5.9 4.4M572.8 324.9l-10.8 4.6M572.5 327.3l6.7 5.0M572.5 327.3l-8.2 3.5M572.2 329.7l9.6 7.1M572.2 329.7l-10.1 4.3M572.0 332.0l5.6 4.2M572.0 332.0l-7.9 3.4M571.7 334.4l7.3 5.4M571.7 334.4l-7.4 3.1M571.4 336.8l5.8 4.3M571.4 336.8l-7.3 3.1M571.1 339.2l8.3 6.2M571.1 339.2l-5.6 2.4M570.8 341.6l7.5 5.6M570.8 341.6l-8.0 3.4M570.5 344.0l4.9 3.7M570.5 344.0l-7.4 3.1M570.2 346.3l7.8 5.8M570.2 346.3l-8.4 3.5M569.9 348.7l5.1 3.8M569.9 348.7l-11.0 4.6M569.7 351.1l8.6 6.4M569.7 351.1l-10.9 4.6M569.4 353.5l5.3 4.0M569.4 353.5l-7.0 3.0M569.1 355.9l5.0 3.7M569.1 355.9l-9.8 4.2M568.8 358.2l6.1 4.6M568.8 358.2l-6.2 2.6M568.5 360.6l6.8 5.1M568.5 360.6l-10.6 4.5M568.2 363.0l8.7 6.5M568.2 363.0l-7.0 2.9M567.9 365.4l5.5 4.1M567.9 365.4l-10.6 4.5M567.6 367.8l7.6 5.6M567.6 367.8l-9.4 4.0M567.4 370.2l5.2 3.9M567.4 370.2l-5.8 2.5M567.1 372.5l8.1 6.1M567.1 372.5l-7.9 3.3M566.8 374.9l5.2 3.8M566.8 374.9l-10.7 4.5M566.5 377.3l7.9 5.9M566.5 377.3l-10.0 4.2M566.2 379.7l5.2 3.9M566.2 379.7l-10.3 4.3M565.9 382.1l5.1 3.8M565.9 382.1l-10.3 4.4M565.6 384.5l7.0 5.2M565.6 384.5l-7.4 3.1M565.3 386.8l7.5 5.6M565.3 386.8l-10.6 4.5M565.1 389.2l6.1 4.5M565.1 389.2l-6.2 2.6M564.8 391.6l7.3 5.5M564.8 391.6l-6.8 2.9M564.5 394.0l5.3 4.0M564.5 394.0l-6.4 2.7" stroke="#707070" stroke-width="0.50" fill="none"/>
<path d="M578 282L564 398" stroke="#777" stroke-width="0.5"/>
<path d="M600.0 278.0l5.3 3.5M600.0 278.0l-6.5 3.2M599.9 280.4l6.6 4.3M599.9 280.4l-7.0 3.5M599.7 282.8l8.8 5.8M599.7 282.8l-6.9 3.5M599.6 285.2l7.5 4.9M599.6 285.2l-6.3 3.2M599.4 287.6l6.8 4.4M599.4 287.6l-5.5 2.7M599.3 290.0l6.3 4.1M599.3 290.0l-5.5 2.7M599.2 292.4l8.7 5.7M599.2 292.4l-8.3 4.1M599.0 294.8l6.0 3.9M599.0 294.8l-7.9 3.9M598.9 297.2l9.7 6.4M598.9 297.2l-5.9 3.0M598.7 299.6l9.1 6.0M598.7 299.6l-7.7 3.8M598.6 302.0l7.5 4.9M598.6 302.0l-9.9 4.9M598.4 304.4l7.0 4.6M598.4 304.4l-8.1 4.0M598.3 306.8l8.5 5.5M598.3 306.8l-10.6 5.3M598.2 309.1l6.7 4.4M598.2 309.1l-9.8 4.9M598.0 311.5l8.6 5.6M598.0 311.5l-8.8 4.4M597.9 313.9l7.1 4.6M597.9 313.9l-7.2 3.6M597.7 316.3l5.3 3.5M597.7 316.3l-6.1 3.0M597.6 318.7l5.4 3.5M597.6 318.7l-9.4 4.7M597.5 321.1l6.3 4.1M597.5 321.1l-6.2 3.1M597.3 323.5l5.4 3.6M597.3 323.5l-9.9 4.9M597.2 325.9l9.4 6.1M597.2 325.9l-9.0 4.5M597.0 328.3l6.4 4.2M597.0 328.3l-6.7 3.3M596.9 330.7l6.5 4.2M596.9 330.7l-7.8 3.9M596.8 333.1l5.8 3.8M596.8 333.1l-7.8 3.9M596.6 335.5l6.3 4.2M596.6 335.5l-10.5 5.2M596.5 337.9l9.9 6.5M596.5 337.9l-8.3 4.1M596.3 340.3l6.2 4.1M596.3 340.3l-10.6 5.3M596.2 342.7l6.6 4.3M596.2 342.7l-7.3 3.6M596.1 345.1l5.0 3.3M596.1 345.1l-7.4 3.7M595.9 347.5l7.4 4.8M595.9 347.5l-8.1 4.0M595.8 349.9l6.0 3.9M595.8 349.9l-8.1 4.0M595.6 352.3l5.0 3.3M595.6 352.3l-6.8 3.4M595.5 354.7l5.5 3.6M595.5 354.7l-7.5 3.7M595.3 357.1l5.2 3.4M595.3 357.1l-5.5 2.7M595.2 359.5l6.5 4.3M595.2 359.5l-6.6 3.3M595.1 361.9l8.0 5.2M595.1 361.9l-8.2 4.1M594.9 364.3l8.8 5.8M594.9 364.3l-8.9 4.4M594.8 366.6l8.6 5.6M594.8 366.6l-10.1 5.0M594.6 369.0l7.0 4.6M594.6 369.0l-7.1 3.5M594.5 371.4l10.0 6.5M594.5 371.4l-6.2 3.1M594.4 373.8l8.7 5.7M594.4 373.8l-8.8 4.4M594.2 376.2l5.2 3.4M594.2 376.2l-9.9 4.9" stroke="#707070" stroke-width="0.50" fill="none"/>
<path d="M600 278L594 380" stroke="#777" stroke-width="0.5"/>
<path d="M609.0 290.0l9.1 6.8M609.0 290.0l-9.0 3.8M608.7 292.4l8.3 6.3M608.7 292.4l-10.0 4.2M608.4 294.8l5.5 4.1M608.4 294.8l-8.4 3.5M608.1 297.1l7.2 5.4M608.1 297.1l-10.2 4.3M607.8 299.5l8.7 6.5M607.8 299.5l-10.1 4.2M607.5 301.9l7.6 5.7M607.5 301.9l-10.5 4.4M607.2 304.3l8.1 6.1M607.2 304.3l-9.4 3.9M606.9 306.7l5.9 4.4M606.9 306.7l-5.7 2.4M606.6 309.1l5.4 4.1M606.6 309.1l-7.5 3.2M606.3 311.4l5.3 4.0M606.3 311.4l-10.2 4.3M606.0 313.8l7.5 5.6M606.0 313.8l-9.0 3.8M605.7 316.2l7.8 5.9M605.7 316.2l-9.3 3.9M605.4 318.6l7.1 5.4M605.4 318.6l-5.6 2.3M605.1 321.0l8.6 6.5M605.1 321.0l-9.7 4.1M604.8 323.3l7.2 5.4M604.8 323.3l-8.5 3.6M604.5 325.7l8.0 6.0M604.5 325.7l-5.9 2.5M604.2 328.1l8.3 6.3M604.2 328.1l-6.9 2.9M603.9 330.5l5.2 3.9M603.9 330.5l-7.0 2.9M603.6 332.9l8.3 6.2M603.6 332.9l-6.7 2.8M603.3 335.2l8.3 6.3M603.3 335.2l-10.9 4.6M603.0 337.6l7.2 5.4M603.0 337.6l-7.7 3.2M602.7 340.0l7.1 5.3M602.7 340.0l-9.3 3.9M602.5 342.4l8.5 6.4M602.5 342.4l-8.9 3.7M602.2 344.8l7.9 5.9M602.2 344.8l-6.0 2.5M601.9 347.2l5.5 4.1M601.9 347.2l-6.9 2.9M601.6 349.5l8.4 6.3M601.6 349.5l-7.2 3.0M601.3 351.9l7.5 5.7M601.3 351.9l-5.6 2.3M601.0 354.3l5.1 3.8M601.0 354.3l-7.0 2.9M600.7 356.7l8.0 6.0M600.7 356.7l-9.4 3.9M600.4 359.1l8.0 6.0M600.4 359.1l-7.1 3.0M600.1 361.4l7.3 5.5M600.1 361.4l-8.1 3.4M599.8 363.8l7.0 5.3M599.8 363.8l-6.2 2.6M599.5 366.2l9.1 6.8M599.5 366.2l-6.6 2.8M599.2 368.6l9.5 7.1M599.2 368.6l-10.7 4.5M598.9 371.0l4.9 3.7M598.9 371.0l-8.1 3.4M598.6 373.4l8.7 6.6M598.6 373.4l-10.9 4.6" stroke="#707070" stroke-width="0.50" fill="none"/>
<path d="M609 290L598 378" stroke="#777" stroke-width="0.5"/>
<path d="M628.0 292.0l6.9 5.3M628.0 292.0l-7.0 2.9M627.7 294.4l5.8 4.4M627.7 294.4l-10.8 4.4M627.4 296.8l5.8 4.4M627.4 296.8l-8.8 3.6M627.1 299.1l5.4 4.2M627.1 299.1l-8.5 3.5M626.7 301.5l9.3 7.1M626.7 301.5l-6.3 2.6M626.4 303.9l8.7 6.6M626.4 303.9l-8.4 3.4M626.1 306.3l9.0 6.9M626.1 306.3l-9.5 3.9M625.8 308.7l5.9 4.5M625.8 308.7l-10.5 4.3M625.5 311.0l7.1 5.4M625.5 311.0l-5.7 2.3M625.2 313.4l4.8 3.7M625.2 313.4l-8.3 3.4M624.9 315.8l6.9 5.3M624.9 315.8l-7.2 3.0M624.5 318.2l5.4 4.2M624.5 318.2l-7.5 3.1M624.2 320.6l6.3 4.8M624.2 320.6l-10.2 4.2M623.9 322.9l4.8 3.6M623.9 322.9l-9.7 4.0M623.6 325.3l8.8 6.7M623.6 325.3l-6.2 2.6M623.3 327.7l9.2 7.0M623.3 327.7l-9.5 3.9M623.0 330.1l9.1 6.9M623.0 330.1l-7.2 2.9M622.7 332.4l6.5 5.0M622.7 332.4l-7.7 3.2M622.3 334.8l9.5 7.3M622.3 334.8l-8.8 3.6M622.0 337.2l6.5 5.0M622.0 337.2l-7.9 3.3M621.7 339.6l6.1 4.6M621.7 339.6l-5.8 2.4M621.4 342.0l5.3 4.0M621.4 342.0l-10.2 4.2M621.1 344.3l6.1 4.7M621.1 344.3l-10.7 4.4M620.8 346.7l6.0 4.5M620.8 346.7l-7.0 2.9M620.5 349.1l7.2 5.5M620.5 349.1l-6.6 2.7M620.1 351.5l6.5 5.0M620.1 351.5l-10.9 4.5M619.8 353.9l9.0 6.9M619.8 353.9l-10.1 4.1M619.5 356.2l7.8 5.9M619.5 356.2l-10.6 4.4M619.2 358.6l9.3 7.1M619.2 358.6l-8.6 3.5M618.9 361.0l8.2 6.3M618.9 361.0l-5.8 2.4M618.6 363.4l8.3 6.3M618.6 363.4l-8.1 3.3M618.3 365.8l8.4 6.4M618.3 365.8l-9.1 3.7M617.9 368.1l6.1 4.7M617.9 368.1l-5.8 2.4M617.6 370.5l9.2 7.0M617.6 370.5l-6.3 2.6M617.3 372.9l7.0 5.4M617.3 372.9l-7.5 3.1M617.0 375.3l6.2 4.7M617.0 375.3l-9.7 4.0M616.7 377.7l9.4 7.2M616.7 377.7l-7.0 2.9M616.4 380.0l7.9 6.0M616.4 380.0l-7.2 3.0M616.1 382.4l7.4 5.7M616.1 382.4l-7.7 3.2M615.7 384.8l5.6 4.3M615.7 384.8l-6.4 2.6M615.4 387.2l5.8 4.4M615.4 387.2l-10.6 4.3M615.1 389.6l7.1 5.5M615.1 389.6l-6.8 2.8M614.8 391.9l9.1 6.9M614.8 391.9l-11.1 4.5M614.5 394.3l6.9 5.3M614.5 394.3l-6.3 2.6" stroke="#707070" stroke-width="0.50" fill="none"/>
<path d="M628 292L614 398" stroke="#777" stroke-width="0.5"/>
<path d="M638.0 300.0l5.8 4.2M638.0 300.0l-6.0 2.7M637.8 302.4l6.5 4.7M637.8 302.4l-6.0 2.7M637.5 304.8l6.0 4.3M637.5 304.8l-6.9 3.1M637.3 307.2l7.7 5.5M637.3 307.2l-10.3 4.6M637.0 309.6l8.5 6.1M637.0 309.6l-7.7 3.4M636.8 311.9l6.9 4.9M636.8 311.9l-8.4 3.7M636.5 314.3l6.7 4.8M636.5 314.3l-7.3 3.3M636.3 316.7l5.2 3.7M636.3 316.7l-7.0 3.1M636.1 319.1l9.6 6.9M636.1 319.1l-6.2 2.7M635.8 321.5l7.3 5.3M635.8 321.5l-8.9 4.0M635.6 323.9l9.1 6.5M635.6 323.9l-6.7 3.0M635.3 326.3l6.2 4.4M635.3 326.3l-6.8 3.0M635.1 328.7l6.8 4.9M635.1 328.7l-7.9 3.5M634.8 331.0l9.5 6.8M634.8 331.0l-10.1 4.5M634.6 333.4l9.1 6.6M634.6 333.4l-5.6 2.5M634.3 335.8l5.0 3.6M634.3 335.8l-9.4 4.2M634.1 338.2l9.2 6.6M634.1 338.2l-8.1 3.6M633.9 340.6l7.7 5.6M633.9 340.6l-5.5 2.4M633.6 343.0l6.8 4.9M633.6 343.0l-10.6 4.7M633.4 345.4l8.9 6.4M633.4 345.4l-10.2 4.5M633.1 347.8l9.6 6.9M633.1 347.8l-6.8 3.0M632.9 350.1l5.4 3.9M632.9 350.1l-6.3 2.8M632.6 352.5l7.4 5.3M632.6 352.5l-9.2 4.1M632.4 354.9l9.5 6.8M632.4 354.9l-9.4 4.2M632.2 357.3l8.0 5.8M632.2 357.3l-9.7 4.3M631.9 359.7l7.1 5.1M631.9 359.7l-8.5 3.8M631.7 362.1l5.1 3.6M631.7 362.1l-9.8 4.4M631.4 364.5l6.0 4.3M631.4 364.5l-10.5 4.7M631.2 366.9l8.0 5.8M631.2 366.9l-7.1 3.2M630.9 369.2l5.5 3.9M630.9 369.2l-6.9 3.1M630.7 371.6l8.0 5.7M630.7 371.6l-9.3 4.1M630.4 374.0l5.4 3.9M630.4 374.0l-5.9 2.6M630.2 376.4l7.4 5.3M630.2 376.4l-8.7 3.9M630.0 378.8l6.8 4.9M630.0 378.8l-6.7 3.0M629.7 381.2l7.8 5.6M629.7 381.2l-5.5 2.5M629.5 383.6l6.3 4.6M629.5 383.6l-8.0 3.6M629.2 386.0l9.5 6.9M629.2 386.0l-9.0 4.0M629.0 388.3l9.2 6.6M629.0 388.3l-8.1 3.6M628.7 390.7l6.0 4.3M628.7 390.7l-6.8 3.0M628.5 393.1l9.6 6.9M628.5 393.1l-9.3 4.2M628.3 395.5l6.4 4.6M628.3 395.5l-5.6 2.5" stroke="#707070" stroke-width="0.50" fill="none"/>
<path d="M638 300L628 398" stroke="#777" stroke-width="0.5"/>
<path d="M575.0 345.0l8.3 3.4M575.0 345.0l-8.0 6.1M575.3 347.4l7.9 3.2M575.3 347.4l-6.0 4.6M575.6 349.8l9.3 3.8M575.6 349.8l-9.2 7.0M575.9 352.1l6.8 2.8M575.9 352.1l-4.9 3.8M576.3 354.5l7.4 3.0M576.3 354.5l-6.8 5.2M576.6 356.9l9.3 3.8M576.6 356.9l-5.7 4.4M576.9 359.3l10.0 4.1M576.9 359.3l-8.3 6.3M577.2 361.7l8.4 3.4M577.2 361.7l-5.7 4.4M577.5 364.0l10.9 4.5M577.5 364.0l-6.3 4.8M577.8 366.4l10.1 4.1M577.8 366.4l-5.9 4.5M578.1 368.8l6.8 2.8M578.1 368.8l-8.4 6.4M578.5 371.2l7.2 3.0M578.5 371.2l-9.3 7.1M578.8 373.6l8.3 3.4M578.8 373.6l-5.7 4.3M579.1 375.9l6.8 2.8M579.1 375.9l-6.8 5.2M579.4 378.3l9.2 3.8M579.4 378.3l-9.3 7.1M579.7 380.7l6.4 2.6M579.7 380.7l-6.6 5.1M580.0 383.1l6.7 2.8M580.0 383.1l-9.4 7.2M580.3 385.4l6.3 2.6M580.3 385.4l-5.0 3.8M580.7 387.8l5.9 2.4M580.7 387.8l-6.6 5.1M581.0 390.2l10.5 4.3M581.0 390.2l-9.0 6.9M581.3 392.6l9.6 3.9M581.3 392.6l-9.5 7.3M581.6 395.0l10.7 4.4M581.6 395.0l-6.3 4.8" stroke="#707070" stroke-width="0.50" fill="none"/>
<path d="M575 345L582 398" stroke="#777" stroke-width="0.5"/>
<path d="M500.0 335.0l6.5 2.9M500.0 335.0l-9.5 6.7M500.2 337.4l9.5 4.3M500.2 337.4l-5.1 3.6M500.5 339.8l9.1 4.1M500.5 339.8l-6.8 4.8M500.7 342.2l7.5 3.4M500.7 342.2l-6.5 4.6M500.9 344.6l6.4 2.9M500.9 344.6l-4.9 3.5M501.1 346.9l7.0 3.2M501.1 346.9l-6.6 4.7M501.4 349.3l10.7 4.8M501.4 349.3l-5.5 3.9M501.6 351.7l10.7 4.9M501.6 351.7l-5.9 4.2M501.8 354.1l7.4 3.4M501.8 354.1l-8.9 6.3M502.0 356.5l10.0 4.5M502.0 356.5l-7.0 5.0M502.3 358.9l5.7 2.6M502.3 358.9l-7.2 5.1M502.5 361.3l7.5 3.4M502.5 361.3l-9.4 6.7M502.7 363.7l6.5 3.0M502.7 363.7l-6.7 4.7M503.0 366.1l10.4 4.7M503.0 366.1l-5.0 3.6M503.2 368.4l7.7 3.5M503.2 368.4l-8.9 6.3M503.4 370.8l9.7 4.4M503.4 370.8l-5.1 3.6M503.6 373.2l5.7 2.6M503.6 373.2l-5.2 3.7M503.9 375.6l10.5 4.8M503.9 375.6l-6.2 4.4M504.1 378.0l9.5 4.3M504.1 378.0l-9.3 6.6M504.3 380.4l7.3 3.3M504.3 380.4l-6.2 4.4M504.6 382.8l10.7 4.9M504.6 382.8l-7.9 5.6M504.8 385.2l6.9 3.1M504.8 385.2l-8.4 5.9M505.0 387.6l7.2 3.3M505.0 387.6l-6.2 4.4M505.2 390.0l5.5 2.5M505.2 390.0l-8.6 6.1M505.5 392.3l10.5 4.8M505.5 392.3l-8.0 5.7M505.7 394.7l10.6 4.8M505.7 394.7l-5.0 3.5" stroke="#707070" stroke-width="0.50" fill="none"/>
<path d="M500 335L506 398" stroke="#777" stroke-width="0.5"/>
<path d="M642.0 335.0l6.2 4.1M642.0 335.0l-7.9 3.9M641.8 337.4l9.8 6.5M641.8 337.4l-10.5 5.2M641.7 339.8l6.9 4.6M641.7 339.8l-6.7 3.3M641.5 342.2l7.2 4.7M641.5 342.2l-8.0 4.0M641.4 344.6l9.6 6.4M641.4 344.6l-6.4 3.1M641.2 347.0l9.0 6.0M641.2 347.0l-9.4 4.6M641.1 349.4l9.1 6.0M641.1 349.4l-9.5 4.7M640.9 351.8l8.0 5.3M640.9 351.8l-7.1 3.5M640.8 354.2l6.6 4.4M640.8 354.2l-7.3 3.6M640.6 356.6l8.9 5.9M640.6 356.6l-5.8 2.9M640.5 359.0l6.0 4.0M640.5 359.0l-9.4 4.6M640.3 361.3l6.2 4.1M640.3 361.3l-5.7 2.8M640.2 363.7l5.2 3.4M640.2 363.7l-8.4 4.1M640.0 366.1l6.6 4.4M640.0 366.1l-10.7 5.2M639.9 368.5l9.4 6.2M639.9 368.5l-10.7 5.3M639.7 370.9l6.3 4.2M639.7 370.9l-5.8 2.9M639.6 373.3l5.5 3.6M639.6 373.3l-8.1 4.0M639.4 375.7l8.6 5.7M639.4 375.7l-7.8 3.8M639.3 378.1l6.2 4.1M639.3 378.1l-7.6 3.8M639.1 380.5l8.1 5.4M639.1 380.5l-9.0 4.4M639.0 382.9l8.7 5.8M639.0 382.9l-9.9 4.9M638.8 385.3l8.3 5.5M638.8 385.3l-6.0 3.0M638.7 387.7l9.2 6.1M638.7 387.7l-7.0 3.4M638.5 390.1l7.8 5.2M638.5 390.1l-7.4 3.6M638.4 392.5l8.7 5.8M638.4 392.5l-6.5 3.2M638.2 394.9l6.2 4.1M638.2 394.9l-6.7 3.3" stroke="#707070" stroke-width="0.50" fill="none"/>
<path d="M642 335L638 398" stroke="#777" stroke-width="0.5"/>
<path d="M552.0 276.0l5.4 -4.3M552.0 276.0l1.6 11.2M554.2 276.9l7.4 -5.9M554.2 276.9l1.1 7.9M556.5 277.8l6.6 -5.2M556.5 277.8l1.7 11.8M558.7 278.7l7.1 -5.6M558.7 278.7l1.0 7.3M560.9 279.6l8.5 -6.7M560.9 279.6l1.4 9.8M563.1 280.5l9.4 -7.4M563.1 280.5l0.9 6.5M565.4 281.3l6.9 -5.5M565.4 281.3l1.5 10.8M567.6 282.2l8.7 -6.9M567.6 282.2l1.6 11.4" stroke="#707070" stroke-width="0.50" fill="none"/>
<path d="M552 276L572 284" stroke="#777" stroke-width="0.5"/>
<path d="M503 274.500L520 290L538 307L546.800 332.600L543.500 399M544.600 274L538 307M546.800 332.600L565 302L583.500 274M594.700 274L592 330L588 384L578 399M588 384L600 379L612 399M623.600 285.800L612 330L600 379M594.700 274L623.600 285.800L643.500 290M643.700 335L634 370L630 399M497 330L508 350L512 399M579 375L572 399M579 375L586 399" fill="none" stroke="#3c3c3c" stroke-width="0.7"/>
<path d="M596 275L622 283L643 284" fill="none" stroke="#2a2a2a" stroke-width="3" opacity="0.7" filter="url(#b1)"/>
<path d="M496 388L500 399" stroke="#333" stroke-width="3" opacity="0.6" filter="url(#b1)"/>
<path d="M514.500 346V395M521.500 340V396M528.500 346V395" stroke="#969696" stroke-width="3" stroke-linecap="round" opacity="0.75" filter="url(#b1)"/>
<circle cx="522.600" cy="364" r="4.500" fill="#ff5a4a" opacity="0.45" filter="url(#b1)"/><circle cx="522.600" cy="364" r="2.200" fill="none" stroke="#e8241c" stroke-width="1.300"/>
<circle cx="637.500" cy="282.500" r="2.600" fill="#bbb" stroke="#444" stroke-width="0.700"/>
</g>
</svg>
<div class="t" style="left:130.70px;top:525.00px;font-size:12.90px;letter-spacing:0.104px;color:#fff;">Залежить від того, що тобі потрібно. Ви обираєте швидкість охолодження.</div>
<div class="t" style="left:130.70px;top:545.00px;font-size:12.90px;letter-spacing:0.143px;color:#fff;">І матеріальні джуджу працюють.</div>
<div class="abs" style="left:10.800px;top:586px;width:94.400px;height:20px;border-radius:3.500px;background:#7b7b7b"></div>
<div class="t" style="left:16.00px;top:592.00px;font-size:10.00px;letter-spacing:-0.066px;color:#fff;">castillo (Unverified)</div>
<div class="abs" style="left:823.800px;top:108px;width:197px;height:108.700px;border-radius:6px;border:2.400px solid #6668cf;box-sizing:border-box;background:#e9e9fb"></div>
<div class="tile" style="left:827.400px;top:111.500px;width:189.900px;height:102.200px;border-radius:3.500px;background:#39241f">
<svg style="left:0;top:0" width="190" height="103" viewBox="827.400 111.500 190 103">
<g filter="url(#b2)">
<rect x="820" y="105" width="205" height="115" fill="#35211d"/>
<rect x="822" y="108" width="14" height="64" fill="#8e8c84"/>
<rect x="822" y="150" width="14" height="24" fill="#6f6a62"/>
<rect x="837" y="111" width="58" height="65" fill="#43271f"/>
<rect x="846" y="117" width="38" height="52" fill="#4c2d25"/>
<rect x="886" y="111" width="9" height="65" fill="#3b231f"/>
<rect x="822" y="175" width="80" height="9" fill="#27161460"/>
<rect x="822" y="175" width="80" height="5" fill="#4a2e28"/>
<rect x="822" y="181" width="80" height="36" fill="#2e1c19"/>
<rect x="895" y="108" width="72" height="70" fill="#35272400"/>
<rect x="896" y="108" width="70" height="68" fill="#33252200"/>
<rect x="897" y="110" width="70" height="66" fill="#382a26"/>
<rect x="900" y="111" width="66" height="10" fill="#65534a"/>
<rect x="903" y="112" width="13" height="8" fill="#b89c78"/><rect x="918" y="113" width="8" height="6" fill="#8c5a48"/><rect x="928" y="112" width="34" height="7" fill="#b6aea8"/>
<rect x="900" y="122" width="66" height="4" fill="#2b1c19"/>
<rect x="922" y="127" width="40" height="25" fill="#655b53"/>
<rect x="923" y="128.500" width="36" height="4.500" fill="#9b9189"/>
<rect x="930" y="151" width="32" height="23" fill="#7f766c"/>
<rect x="934" y="155" width="10" height="16" fill="#a39a8c"/><rect x="946" y="156" width="12" height="15" fill="#5f6468"/>
<rect x="966" y="108" width="55" height="110" fill="#281918"/>
<rect x="972" y="116" width="40" height="60" fill="#301e1b"/>
<rect x="985.500" y="122" width="4" height="20" fill="#5a5755"/>
<rect x="902" y="177" width="66" height="40" fill="#281a18"/>
<!-- person -->
<path d="M858 216C864 200 880 192 900 189L930 189C950 192 962 200 970 216Z" fill="#8d9499"/>
<path d="M880 216C884 204 892 197 900 194L900 216Z" fill="#7b8388"/>
<ellipse cx="913" cy="147" rx="20" ry="14" fill="#3a312f"/><ellipse cx="893.500" cy="166" rx="2.500" ry="5" fill="#8d6f60"/>
<ellipse cx="914" cy="166.500" rx="19" ry="25" fill="#a08171"/>
<ellipse cx="914" cy="152" rx="15" ry="9" fill="#b19483"/>
<path d="M896.500 170C897.500 186 904 197 914 198C924 197 930.500 186 931.500 170C927 181 921 184.500 914 184.500C907 184.500 901 181 896.500 170Z" fill="#8d847e"/>
<rect x="902.500" y="164" width="8.500" height="3" rx="1.500" fill="#4c3932"/><rect x="916.500" y="164" width="8.500" height="3" rx="1.500" fill="#4c3932"/>
<rect x="901" y="160.500" width="10" height="1.800" fill="#5a463e"/><rect x="917" y="160.500" width="10" height="1.800" fill="#5a463e"/>
<ellipse cx="914" cy="176.500" rx="4" ry="2" fill="#876857"/>
<ellipse cx="914" cy="188" rx="8.500" ry="3.200" fill="#54413b"/>
<ellipse cx="947" cy="206" rx="9" ry="7.500" fill="#876352"/>
<rect x="930" y="199" width="15" height="15" fill="#3f2c28"/>
</g>
</svg>
<div class="abs" style="left:3px;top:79.500px;width:114.200px;height:23px;border-radius:3px 3px 3px 0;background:rgba(20,16,14,.58)"></div>
</div>
<div class="t" style="left:835.60px;top:197.00px;font-size:10.00px;letter-spacing:-0.081px;color:#fff;">castillo (Unverified)</div>
<svg style="left:925px;top:193.500px" width="15.400" height="15.400" viewBox="0 0 14 14" fill="none" stroke="#fff" stroke-width="0.85" stroke-linejoin="round" stroke-linecap="round">
<path d="M8.300 2.100l3.600 3.600l-1.200 0.500l-1.700 1.700l-0.500 2.600l-5-5l2.600-0.500l1.700-1.700z M5.700 8.300l-3.500 3.500"/></svg>
<div class="tile" style="left:824.5px;top:220.7px;width:96.2px;height:71.6px;background:linear-gradient(135deg,#f3f0e8,#eef1e8);border:1px solid rgba(0,0,0,.06)"></div>
<div class="abs" style="left:852.200px;top:236.400px;width:40px;height:40px;border-radius:50%;background:#d6e6ee;box-shadow:0 1px 2px rgba(0,0,0,.12)"></div>
<div class="t" style="left:858.80px;top:249.00px;font-size:15.30px;letter-spacing:-0.307px;color:#27343c;">СЮ</div>
<div class="badge" style="left:827.4px;top:269.4px;background:rgba(98,96,90,.85)"><svg style="left:0;top:0" width="23" height="20" viewBox="0 0 23 20"><rect x="9.400" y="4.300" width="4.200" height="7.400" rx="2.100" fill="#f2f2f2"/><path d="M7.800 9.600a3.700 3.700 0 0 0 7.400 0M11.500 13.500v2" fill="none" stroke="#ededed" stroke-width="0.9" stroke-linecap="round"/><path d="M6 4.600l10.600 10.800" stroke="#6a6864" stroke-width="1.700"/><path d="M6 4.600l10.600 10.800" stroke="#f0f0f0" stroke-width="0.85" stroke-linecap="round"/></svg></div>
<div class="tile" style="left:924.5px;top:220.7px;width:96.2px;height:71.6px;background:#f1eed3;border:1px solid rgba(0,0,0,.06)"><svg style="left:-1px;top:-1px" width="97" height="73" viewBox="924.500 220.700 97 73">
<defs><linearGradient id="wy" x1="0" x2="1"><stop offset="0" stop-color="#f4f3ec"/><stop offset="0.18" stop-color="#f3f0d6"/><stop offset="1" stop-color="#efecd0"/></linearGradient></defs>
<g filter="url(#b2)">
<rect x="920" y="215" width="105" height="82" fill="url(#wy)"/>
<rect x="995" y="215" width="8" height="62" fill="#dfe7d8"/>
<rect x="1002.500" y="215" width="22" height="60" fill="#2b504d"/>
<rect x="1000" y="275" width="25" height="22" fill="#e7e0ca"/>
<path d="M938 297C944 281 955 274 968 272.500L1000 275C1012 279 1018 287 1021 297Z" fill="#ece9e2"/>
<path d="M962.500 281C965 258 969.500 245.500 981 245.500C992 245.500 995.500 256 995 272L990 280L973 282Z" fill="#2d2321"/>
<ellipse cx="981.200" cy="260.500" rx="10.300" ry="13" fill="#ddb9a9"/>
<path d="M972 256.500h6.500M984 256.500h6.500" stroke="#6a4e44" stroke-width="1.400"/>
<ellipse cx="987" cy="275" rx="10.500" ry="6.800" fill="#e3bca9"/>
<path d="M993 278L1006 286" stroke="#e3bca9" stroke-width="7.500"/>
<rect x="996.500" y="276" width="8.500" height="5" fill="#1f1f20" transform="rotate(-35 1001 278.500)"/>
<path d="M988.500 282L985.500 295" stroke="#33302f" stroke-width="1.700"/>
</g></svg></div>
<div class="badge" style="left:927.4px;top:269.4px;background:rgba(84,82,78,.78)"><svg style="left:0;top:0" width="23" height="20" viewBox="0 0 23 20"><rect x="9.400" y="4.300" width="4.200" height="7.400" rx="2.100" fill="#f2f2f2"/><path d="M7.800 9.600a3.700 3.700 0 0 0 7.400 0M11.500 13.500v2" fill="none" stroke="#ededed" stroke-width="0.9" stroke-linecap="round"/><path d="M6 4.600l10.600 10.800" stroke="#6a6864" stroke-width="1.700"/><path d="M6 4.600l10.600 10.800" stroke="#f0f0f0" stroke-width="0.85" stroke-linecap="round"/></svg></div>
<div class="tile" style="left:824.5px;top:296.2px;width:96.2px;height:71.6px;background:linear-gradient(120deg,#f2eaf3,#ebe9f4 60%,#ece6f2);border:1px solid rgba(0,0,0,.06)"></div>
<svg style="left:852.200px;top:311.800px" width="40" height="40" viewBox="852.200 311.800 40 40">
<defs><clipPath id="av1"><circle cx="872.200" cy="331.800" r="20"/></clipPath></defs>
<g clip-path="url(#av1)"><g filter="url(#b1)">
<rect x="850" y="310" width="44" height="44" fill="#e4e6e0"/>
<rect x="872" y="311" width="16" height="13" fill="#f5f6f3"/>
<rect x="877" y="321" width="9" height="22" fill="#5a7c52"/>
<rect x="880" y="318" width="6" height="8" fill="#7a9a6c"/>
<rect x="885" y="315" width="10" height="30" fill="#b99787"/>
<rect x="877" y="341" width="18" height="12" fill="#c9bca9"/>
<ellipse cx="866" cy="321.500" rx="12.500" ry="9" fill="#73625a"/>
<ellipse cx="866.500" cy="334" rx="12.300" ry="16.500" fill="#c2957f"/>
<ellipse cx="866" cy="326" rx="9.500" ry="4.500" fill="#cda28c"/>
<path d="M855 338C857 349 863 352.500 868 352.500C873 352.500 878 348 879 338C874 343.500 860 343.500 855 338Z" fill="#9a7562"/>
<path d="M861 330.500h4M869.500 330.500h4" stroke="#5a4238" stroke-width="1.200"/>
<path d="M861 339.500C864.500 342 870 342 873.500 339.500" stroke="#f2ebe6" stroke-width="1.500" fill="none"/>
<path d="M868 353L883 346L886 355Z" fill="#5f8088"/>
</g></g></svg>
<div class="badge" style="left:827.4px;top:344.2px;background:rgba(110,108,112,.88)"><svg style="left:0;top:0" width="23" height="20" viewBox="0 0 23 20"><rect x="9.400" y="4.300" width="4.200" height="7.400" rx="2.100" fill="#f2f2f2"/><path d="M7.800 9.600a3.700 3.700 0 0 0 7.400 0M11.500 13.500v2" fill="none" stroke="#ededed" stroke-width="0.9" stroke-linecap="round"/><path d="M6 4.600l10.600 10.800" stroke="#6a6864" stroke-width="1.700"/><path d="M6 4.600l10.600 10.800" stroke="#f0f0f0" stroke-width="0.85" stroke-linecap="round"/></svg></div>
<div class="tile" style="left:924.5px;top:296.2px;width:96.2px;height:71.6px;background:linear-gradient(120deg,#f2e9f2,#ebe9f4 60%,#eee6f1);border:1px solid rgba(0,0,0,.06)"></div>
<svg style="left:952.400px;top:311.800px" width="40" height="40" viewBox="952.400 311.800 40 40">
<defs><clipPath id="av2"><circle cx="972.400" cy="331.800" r="20"/></clipPath></defs>
<g clip-path="url(#av2)"><g filter="url(#b1)">
<rect x="950" y="310" width="44" height="44" fill="#201d1e"/>
<rect x="952" y="327" width="7" height="5" fill="#cfcfcf"/>
<rect x="984" y="322" width="9" height="14" fill="#3a3c3a"/>
<path d="M958 352C956.500 336 959 321 970.500 318C982.500 317.500 987.500 328 986 352Z" fill="#d9c8a8"/>
<path d="M960.500 327.500C965 320.500 978 318.500 985 324.500" stroke="#efede8" stroke-width="4.200" fill="none" stroke-linecap="round"/>
<ellipse cx="969.800" cy="335.500" rx="8.300" ry="10.300" fill="#e0b297"/>
<rect x="961.500" y="330.500" width="15.500" height="5.200" rx="2.500" fill="#f0a225"/>
<path d="M967.500 342.500h4.500" stroke="#b96a5a" stroke-width="1.200"/>
<path d="M955 354C957 345 964 342.500 971 345L987 340.500C990.500 345 992 350 992 354Z" fill="#e6e4dd"/>
</g></g></svg>
<div class="badge" style="left:927.4px;top:344.2px;background:rgba(110,108,112,.88)"><svg style="left:0;top:0" width="23" height="20" viewBox="0 0 23 20"><rect x="9.400" y="4.300" width="4.200" height="7.400" rx="2.100" fill="#f2f2f2"/><path d="M7.800 9.600a3.700 3.700 0 0 0 7.400 0M11.500 13.500v2" fill="none" stroke="#ededed" stroke-width="0.9" stroke-linecap="round"/><path d="M6 4.600l10.600 10.800" stroke="#6a6864" stroke-width="1.700"/><path d="M6 4.600l10.600 10.800" stroke="#f0f0f0" stroke-width="0.85" stroke-linecap="round"/></svg></div>
<div class="tile" style="left:824.5px;top:371.0px;width:96.2px;height:71.6px;background:#ddd0c0;border:1px solid rgba(0,0,0,.06)"><svg style="left:-1px;top:-1px" width="97" height="73" viewBox="824.500 371 97 73">
<g filter="url(#b2)">
<rect x="820" y="366" width="105" height="82" fill="#e0d3c4"/>
<rect x="856" y="366" width="70" height="30" fill="#e4d9cb"/>
<rect x="820" y="366" width="33" height="82" fill="#e4e1dd"/>
<rect x="820" y="366" width="9" height="82" fill="#d5d2ce"/>
<rect x="852" y="366" width="4.500" height="82" fill="#c2b3a0"/>
<rect x="820" y="366" width="105" height="7.500" fill="#9e8c78" opacity="0.75"/>
<path d="M865 424C861 406 866.500 391 884 390C901.500 391 907 406 903 424Z" fill="#75625a"/><rect x="877" y="426" width="13" height="14" fill="#d9b19d"/>
<path d="M860 446C858 428 861 414 867.500 408L874 441ZM908 446C911 428 907.500 415 900.500 408L895 441Z" fill="#cfbb9a"/>
<ellipse cx="883.500" cy="414" rx="13.600" ry="18.800" fill="#dfbaa7"/>
<path d="M874 410.500h7M886.500 410.500h7" stroke="#7a5c50" stroke-width="1.400"/>
<path d="M879.500 427h8" stroke="#c08878" stroke-width="1.600"/>
<path d="M836 448C840 432 855 428.500 868 428.500L876 440L892 440L900 428.500C913 430.500 919 436 923 448Z" fill="#d1ebe6"/>
<path d="M874 438.500L884 445L893 438.500L893 448L874 448Z" fill="#3c4046"/>
<ellipse cx="831" cy="439" rx="6" ry="5.500" fill="#3f4d2e"/>
</g></svg></div>
<div class="badge" style="left:827.4px;top:419.7px;background:rgba(92,88,82,.85)"><svg style="left:0;top:0" width="23" height="20" viewBox="0 0 23 20"><rect x="9.400" y="4.300" width="4.200" height="7.400" rx="2.100" fill="#f2f2f2"/><path d="M7.800 9.600a3.700 3.700 0 0 0 7.400 0M11.500 13.500v2" fill="none" stroke="#ededed" stroke-width="0.9" stroke-linecap="round"/><path d="M6 4.600l10.600 10.800" stroke="#6a6864" stroke-width="1.700"/><path d="M6 4.600l10.600 10.800" stroke="#f0f0f0" stroke-width="0.85" stroke-linecap="round"/></svg></div>
<div class="tile" style="left:924.5px;top:371.0px;width:96.2px;height:71.6px;background:linear-gradient(100deg,#efeaee 20%,#f3dfee 95%);border:1px solid rgba(0,0,0,.06)"></div>
<div class="abs" style="left:952.400px;top:386.800px;width:40px;height:40px;border-radius:50%;background:#d8eeee;box-shadow:0 1px 2px rgba(0,0,0,.12)"></div>
<div class="t" style="left:959.30px;top:399.00px;font-size:15.60px;letter-spacing:0.202px;color:#2a5b5e;">БЮ</div>
<div class="badge" style="left:927.4px;top:419.7px;background:rgba(98,94,92,.88)"><svg style="left:0;top:0" width="23" height="20" viewBox="0 0 23 20"><rect x="9.400" y="4.300" width="4.200" height="7.400" rx="2.100" fill="#f2f2f2"/><path d="M7.800 9.600a3.700 3.700 0 0 0 7.400 0M11.500 13.500v2" fill="none" stroke="#ededed" stroke-width="0.9" stroke-linecap="round"/><path d="M6 4.600l10.600 10.800" stroke="#6a6864" stroke-width="1.700"/><path d="M6 4.600l10.600 10.800" stroke="#f0f0f0" stroke-width="0.85" stroke-linecap="round"/></svg></div>
<div class="t" style="left:914.20px;top:454.00px;font-size:11.80px;letter-spacing:-0.101px;color:#333;">2/3</div>
<svg style="left:895px;top:450px" width="60" height="18" viewBox="895 450 60 18" fill="none" stroke="#333" stroke-width="1.100" stroke-linecap="round" stroke-linejoin="round">
<path d="M901.500 454.300l-4 4.900l4 4.900M943 454.300l4 4.900l-4 4.900"/></svg>
<div class="tile" style="left:824.500px;top:476.300px;width:196.300px;height:108.600px;background:#c6c7c9">
<svg style="left:0;top:0" width="197" height="109" viewBox="824.500 476.300 197 109">
<defs><linearGradient id="wl" x1="0" x2="1"><stop offset="0" stop-color="#b2b3b8"/><stop offset="1" stop-color="#c0c1c5"/></linearGradient>
<linearGradient id="wr" x1="0" y1="0" x2="0" y2="1"><stop offset="0" stop-color="#cbccce"/><stop offset="1" stop-color="#c0c1c4"/></linearGradient></defs>
<g filter="url(#b2)">
<rect x="820" y="470" width="205" height="120" fill="url(#wr)"/>
<rect x="820" y="470" width="45" height="120" fill="url(#wl)"/>
<path d="M899.500 504.500L1004 506L1012.500 560L898.800 558Z" fill="#2d5b56"/>
<path d="M899 559.500L1012.500 561.500" stroke="#e1e3df" stroke-width="1.300"/>
<path d="M899 504L899 559" stroke="#cfd3cf" stroke-width="0.800"/>
<rect x="971" y="563.500" width="6.500" height="5" fill="#f2f2ee"/>
<!-- microscope -->
<path d="M832 586L844 570L851 548L850 530L869 528L877 546L880 560L881 586Z" fill="#2c2b2e"/>
<rect x="851.500" y="543" width="6" height="15" fill="#8a8278"/>
<path d="M849 514L863 513L867 541L852 543Z" fill="#262224"/>
<path d="M850 512.300L864.500 512.300L872 530L866.500 535L858.500 519L850 516Z" fill="#e8c6cd"/>
<path d="M873 530C883 540 880 560 885 574" stroke="#2b2a2d" stroke-width="2" fill="none"/>
<rect x="880" y="560" width="5.500" height="8" fill="#d8d8d4"/>
<rect x="838" y="566" width="6" height="6" fill="#dcdcdc"/>
<!-- man -->
<path d="M874 590L879 566C883 557 890 553.500 900 552.500L940 552.500C951 554 958 559 961 568L965.500 590Z" fill="#ac4524"/>
<path d="M904 552L918 562L933 552Z" fill="#8d3518"/>
<path d="M930 560C940 566 946 576 948 590L936 590Z" fill="#983a1b"/>
<ellipse cx="918.500" cy="521" rx="14.300" ry="11.800" fill="#4e382c"/>
<ellipse cx="918.600" cy="532.500" rx="13" ry="17" fill="#cba089"/>
<path d="M905.500 528C906.500 518.500 912 515 919 515C926 515 931 518.500 931.700 528C927 521.500 911 521.500 905.500 528Z" fill="#4e382c"/>
<path d="M909.500 530h6.500M921.500 530h6.500" stroke="#5d4438" stroke-width="1.600"/>
<path d="M918.500 532v6" stroke="#b58a74" stroke-width="2"/>
<path d="M906.500 538C907.500 549 913 553 919 553C925 553 930.500 548 931.500 538C927 544.500 911 544.500 906.500 538Z" fill="#8f6c58"/>
<path d="M892 582L899 566" stroke="#ac4524" stroke-width="14" stroke-linecap="round"/>
<path d="M897.500 565L908 551" stroke="#c9987f" stroke-width="11" stroke-linecap="round"/>
<ellipse cx="912.500" cy="549.500" rx="11.500" ry="7.800" fill="#cf9f86"/>
<rect x="889" y="562.500" width="15" height="9.500" rx="2.500" fill="#1c1a1b" transform="rotate(12 896.500 567)"/>
<path d="M920 549.500L927.500 546" stroke="#222" stroke-width="2.200"/>
</g></svg>
</div>
<div class="badge" style="left:830.6px;top:559.0px;background:rgba(60,58,58,.6)"><svg style="left:0;top:0" width="23" height="20" viewBox="0 0 23 20"><rect x="9.400" y="4.300" width="4.200" height="7.400" rx="2.100" fill="#f2f2f2"/><path d="M7.800 9.600a3.700 3.700 0 0 0 7.400 0M11.500 13.500v2" fill="none" stroke="#ededed" stroke-width="0.9" stroke-linecap="round"/><path d="M6 4.600l10.600 10.800" stroke="#6a6864" stroke-width="1.700"/><path d="M6 4.600l10.600 10.800" stroke="#f0f0f0" stroke-width="0.85" stroke-linecap="round"/></svg></div>
</body></html>
